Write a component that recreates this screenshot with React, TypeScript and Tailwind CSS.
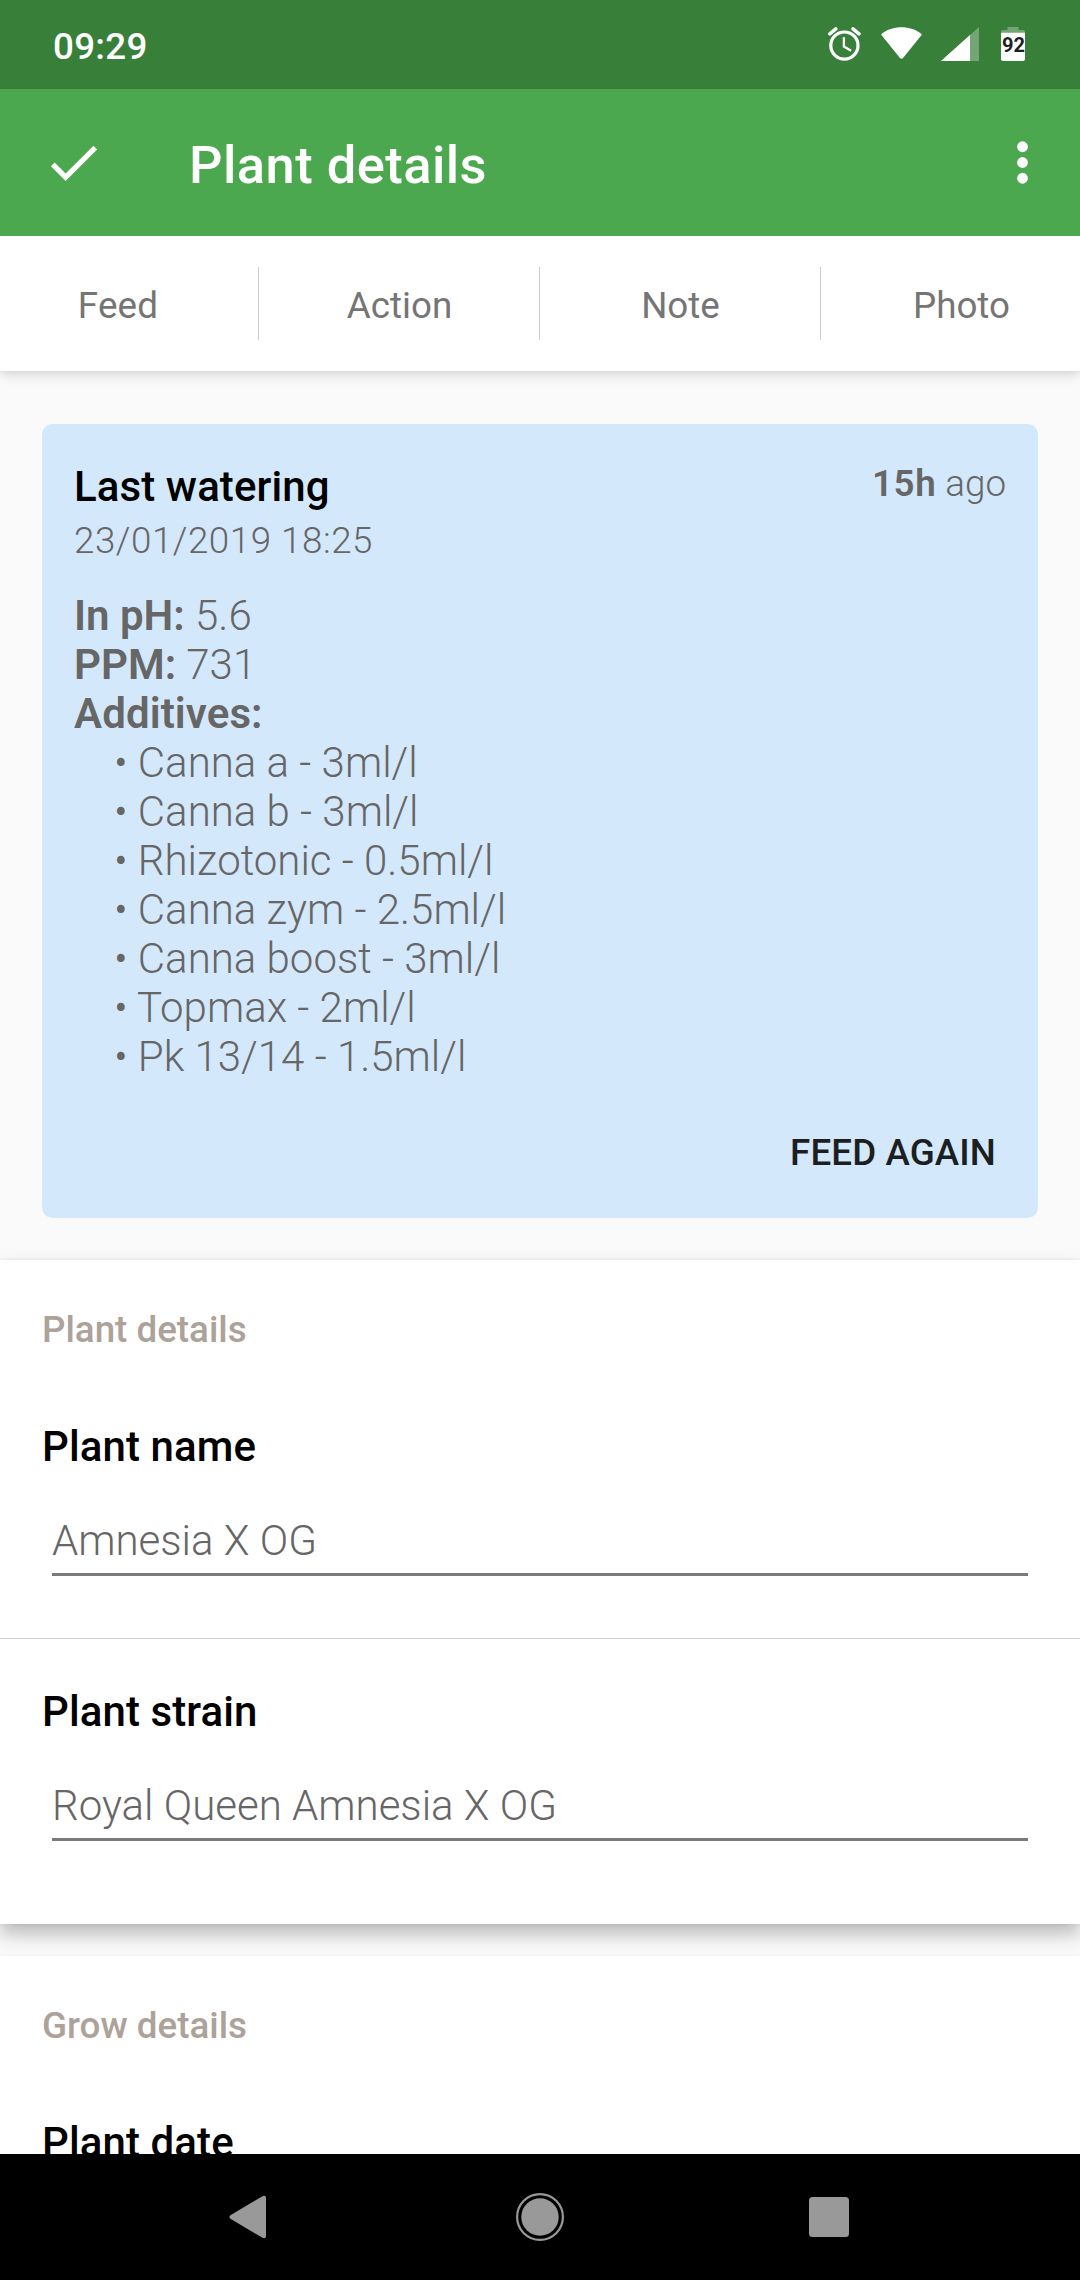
import React from "react";

const additives = [
  "Canna a - 3ml/l",
  "Canna b - 3ml/l",
  "Rhizotonic - 0.5ml/l",
  "Canna zym - 2.5ml/l",
  "Canna boost - 3ml/l",
  "Topmax - 2ml/l",
  "Pk 13/14 - 1.5ml/l",
];

function StatusBar() {
  return (
    <div className="flex h-[89px] shrink-0 items-start justify-between bg-[#387f3a] pl-[53px] pr-[55px] text-white">
      <span className="mt-[25px] text-[36.75px] font-medium leading-[43px] tracking-[0.3px]">09:29</span>
      <div className="flex pt-[27px]">
        <svg className="mr-[20px] h-[35px] w-[33px]" viewBox="0 0 33 35" fill="none" stroke="#fff">
          <circle cx="16.4" cy="18.6" r="13.6" strokeWidth="3.2" />
          <path d="M15.9 10.3v9.2l7.2 4.3" strokeWidth="2.3" />
          <path d="M1.8 6.9l6-5M31 6.9l-6-5" strokeWidth="3.4" strokeLinecap="round" />
        </svg>
        <svg className="mr-[19px] h-[35px] w-[41px]" viewBox="0 0 41 35" fill="#fff">
          <path d="M.8 6.7C6 2.6 13 .3 20.5.3S35 2.6 40.2 6.7q.9.7.2 1.6L22 31q-1.500 1.600-3 0L.6 8.300q-.700-.900.200-1.600z" />
        </svg>
        <svg className="mr-[22px] h-[35px] w-[38px]" viewBox="0 0 38 35">
          <path d="M38 0v34H0z" fill="#fff" fillOpacity="0.3" />
          <path d="M29 8v26H0z" fill="#fff" />
        </svg>
        <div className="relative h-[35px] w-[24px]">
          <svg className="h-[35px] w-[24px]" viewBox="0 0 24 35">
            <path d="M6.500 0h11v3H22q2 0 2 2v1H0V5q0-2 2-2h4.500z" fill="#fff" fillOpacity="0.3" />
            <path d="M0 5.700h24V32q0 2-2 2H2q-2 0-2-2z" fill="#fff" />
          </svg>
          <span className="absolute left-[1px] top-[8px] text-[20px] font-bold leading-[20px] text-[#1f1f1f]">92</span>
        </div>
      </div>
    </div>
  );
}

function AppBar() {
  return (
    <div className="relative z-10 flex h-[147px] shrink-0 items-center bg-[#4ba84e] pl-[42px] pr-[26px] text-white">
      <svg className="h-[63px] w-[63px]" viewBox="0 0 24 24" fill="#fff">
        <path d="M9 16.170L4.830 12l-1.420 1.410L9 19 21 7l-1.410-1.410z" />
      </svg>
      <h1 className="ml-[84px] mt-[4px] flex-1 text-[52.5px] font-medium leading-[62px] tracking-[0.45px]">Plant details</h1>
      <svg className="h-[63px] w-[63px]" viewBox="0 0 24 24" fill="#fff">
        <circle cx="12" cy="6" r="2.05" />
        <circle cx="12" cy="12" r="2.05" />
        <circle cx="12" cy="18" r="2.05" />
      </svg>
    </div>
  );
}

function ActionTabs() {
  return (
    <div className="relative flex h-[135px] shrink-0 items-center bg-white pb-px text-center text-[36.75px] leading-[69px] text-[#757575] shadow-[0_2px_12px_rgba(0,0,0,0.2)]">
      <div className="w-[258px] pr-[22px] pt-[4px] tracking-[0.2px]">Feed</div>
      <div className="w-[281px] border-l border-[#cccccc] pl-[1px] pt-[4px]">Action</div>
      <div className="w-[281px] border-l border-[#cccccc] pl-[1px] pt-[4px]">Note</div>
      <div className="w-[260px] border-l border-[#cccccc] pl-[22px] pt-[4px]">Photo</div>
    </div>
  );
}

function WateringCard() {
  return (
    <div className="mx-[42px] mt-[53px] h-[794px] shrink-0 rounded-[10.5px] bg-[#d4e8fc] px-[32px] pt-[38px] font-light text-[#666666]">
      <div className="flex items-start justify-between">
        <div>
          <h2 className="text-[42px] font-medium leading-[49px] tracking-[0.1px] text-black">Last watering</h2>
          <div className="mt-[8px] text-[36.75px] leading-[43px] tracking-[0.53px]">23/01/2019 18:25</div>
        </div>
        <div className="text-[36.75px] leading-[43px]">
          <b className="font-semibold tracking-[0.6px]">15h</b> ago
        </div>
      </div>
      <div className="mt-[29px] text-[42px] leading-[49px]">
        <div><b className="font-semibold">In pH:</b> 5.6</div>
        <div><b className="font-semibold">PPM:</b> 731</div>
        <div><b className="font-semibold tracking-[0.1px]">Additives:</b></div>
        <ul className="pl-[40px]">
          {additives.map((a) => (
            <li key={a}>• {a}</li>
          ))}
        </ul>
      </div>
      <div className="mt-[50px] pr-[10px] text-right text-[36.75px] font-medium leading-[43px] tracking-[0.1px] text-[#1c1f21]">FEED AGAIN</div>
    </div>
  );
}

function Field({ label, value }: { label: string; value: string }) {
  return (
    <div className="flex flex-col px-[42px]">
      <label className="text-[42px] font-medium leading-[49px] tracking-[0.1px] text-black">{label}</label>
      <div className="mx-[10px] mt-[45px] h-[60px] border-b-[3px] border-[#7b7b7b] text-[42px] font-light leading-[49px] text-[#666666]">{value}</div>
    </div>
  );
}

function SectionTitle({ children }: { children: React.ReactNode }) {
  return <h3 className="px-[42px] pt-[48px] text-[36.75px] font-medium leading-[43px] text-[#ada299]">{children}</h3>;
}

function NavBar() {
  return (
    <div className="relative flex h-[126px] shrink-0 items-center justify-center gap-[243px] bg-black">
      <svg className="h-[48px] w-[48px]" viewBox="0 0 48 48" fill="#999">
        <path d="M5.800 22.100L37.500 3.200q3.500-1.500 3.500 1.800v38q0 3.300-3.500 1.800L5.800 25.900q-2.800-1.900 0-3.800z" />
      </svg>
      <svg className="h-[48px] w-[48px]" viewBox="0 0 48 48">
        <circle cx="24" cy="24" r="22.900" fill="none" stroke="#999" strokeWidth="2.200" />
        <circle cx="24" cy="24" r="18.700" fill="#999" />
      </svg>
      <svg className="h-[48px] w-[48px]" viewBox="0 0 48 48">
        <rect x="2" y="4" width="40" height="40" rx="3.500" fill="#999" />
      </svg>
    </div>
  );
}

export default function App() {
  return (
    <div className="flex h-[2280px] w-[1080px] flex-col overflow-hidden bg-[#fafafa] font-[Roboto,sans-serif]">
      <StatusBar />
      <AppBar />
      <ActionTabs />
      <main className="flex min-h-0 flex-1 flex-col overflow-hidden">
        <WateringCard />
        <section className="mt-[42px] h-[664px] shrink-0 bg-white shadow-[0_10px_18px_rgba(0,0,0,0.26),0_0_3px_rgba(0,0,0,0.08)]">
          <SectionTitle>Plant details</SectionTitle>
          <div className="mt-[71px]">
            <Field label="Plant name" value="Amnesia X OG" />
          </div>
          <div className="mt-[62px] border-t border-[#cccccc] pt-[48px]">
            <Field label="Plant strain" value="Royal Queen Amnesia X OG" />
          </div>
        </section>
        <section className="mt-[32px] h-[664px] shrink-0 bg-white shadow-[0_0_3px_rgba(0,0,0,0.08)]">
          <SectionTitle>Grow details</SectionTitle>
          <div className="mt-[71px]">
            <Field label="Plant date" value="" />
          </div>
        </section>
      </main>
      <NavBar />
    </div>
  );
}
